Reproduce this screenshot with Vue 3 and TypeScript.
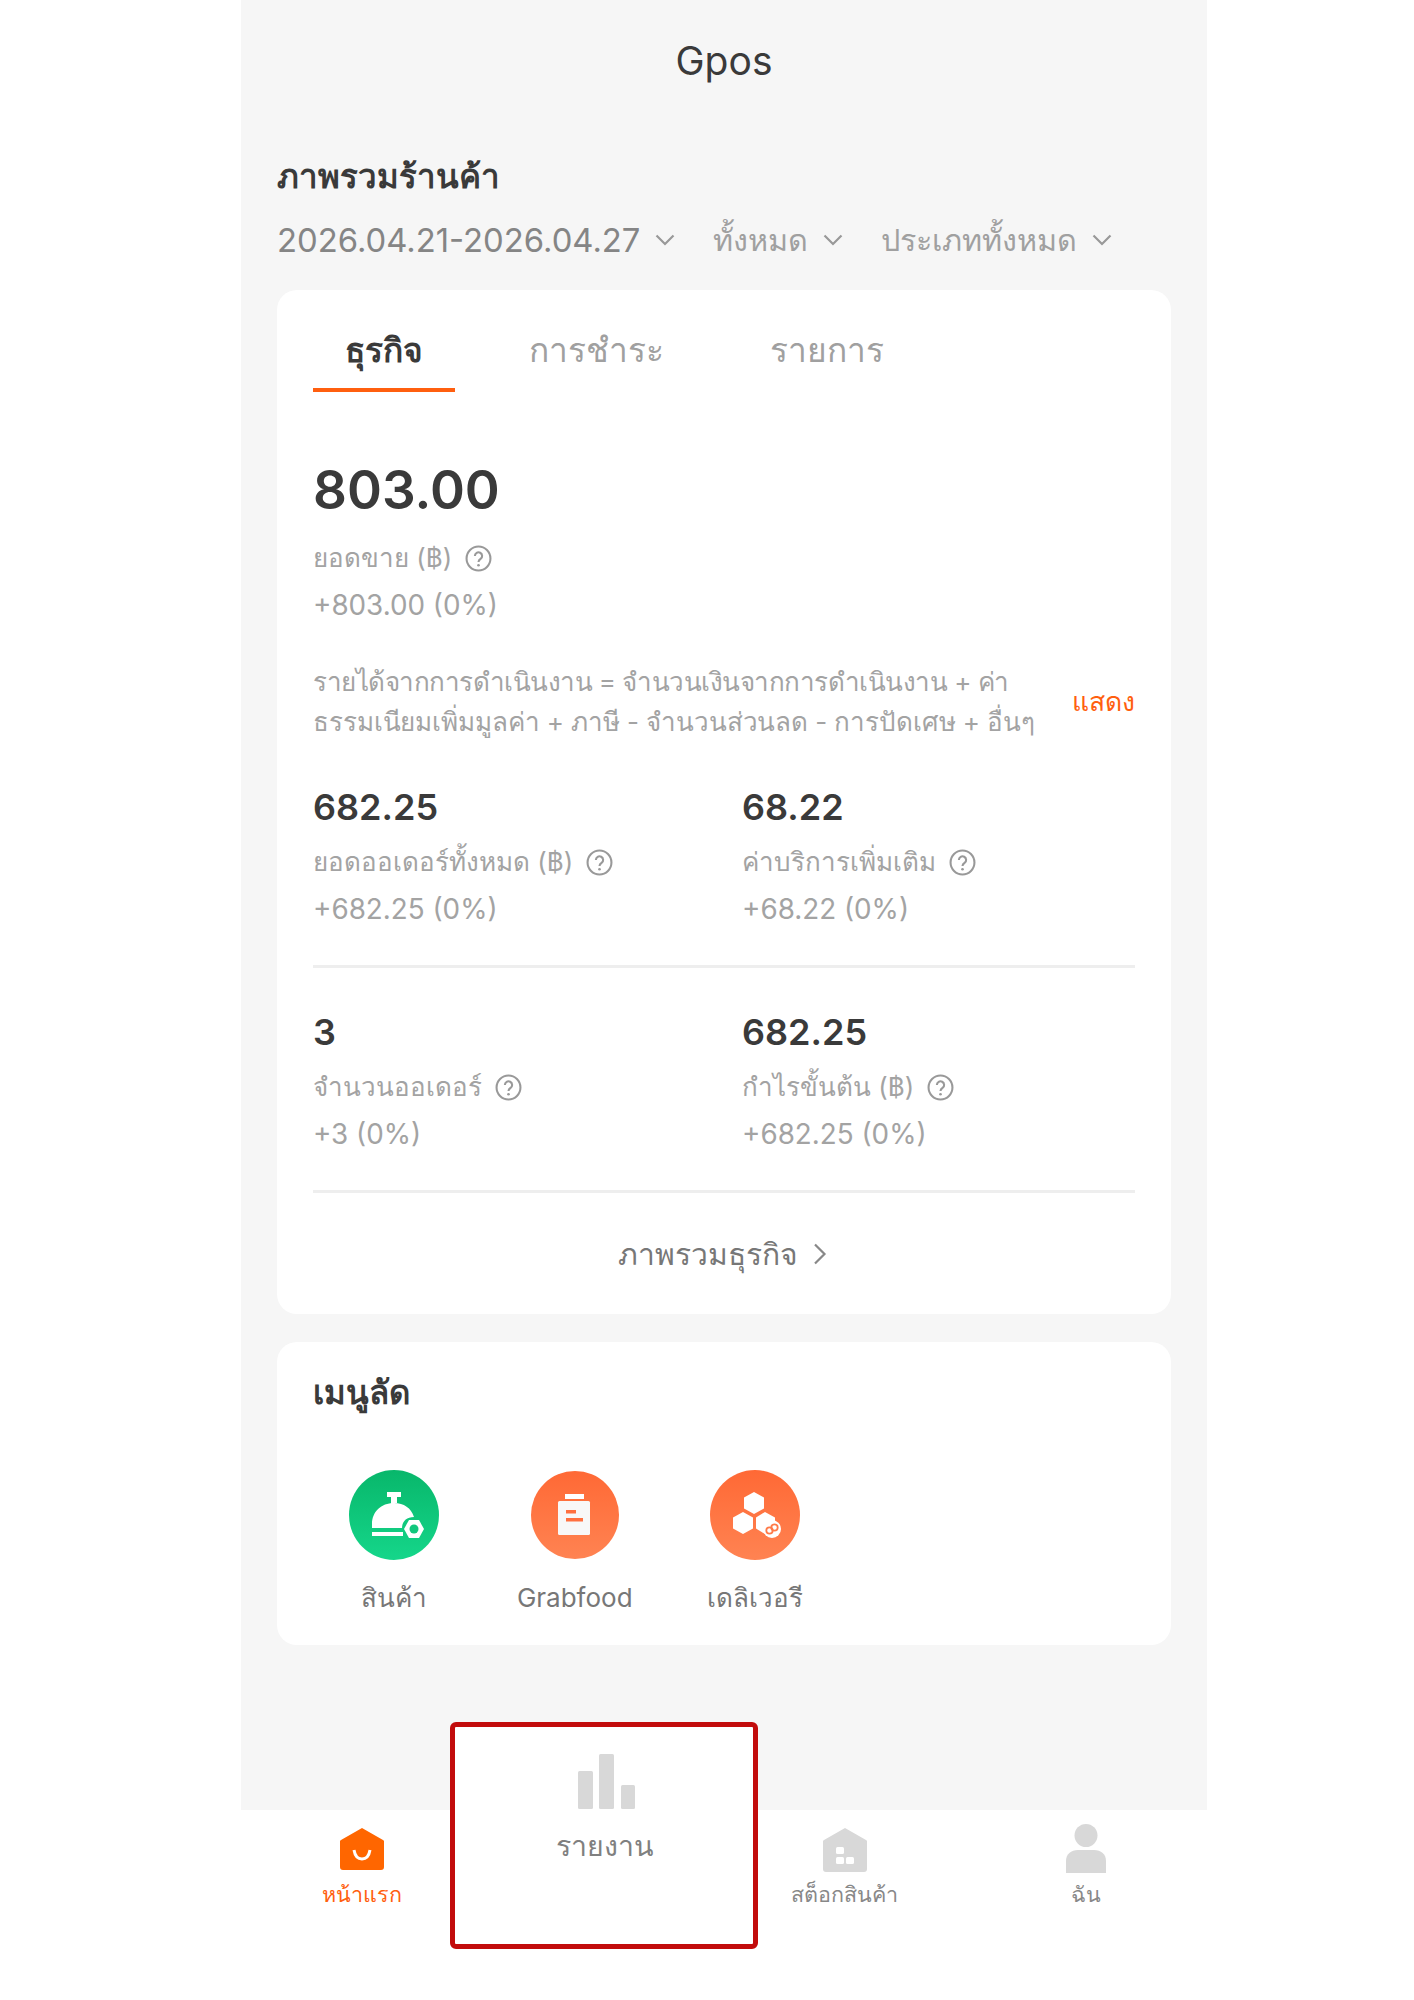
<script setup lang="ts">
interface Stat {
  value: string
  label: string
  change: string
}

const filters = [
  { text: '2026.04.21-2026.04.27', dark: true },
  { text: 'ทั้งหมด', dark: false },
  { text: 'ประเภททั้งหมด', dark: false }
]

const tabs = ['ธุรกิจ', 'การชำระ', 'รายการ']

const statRows: Stat[][] = [
  [
    { value: '682.25', label: 'ยอดออเดอร์ทั้งหมด (฿)', change: '+682.25 (0%)' },
    { value: '68.22', label: 'ค่าบริการเพิ่มเติม', change: '+68.22 (0%)' }
  ],
  [
    { value: '3', label: 'จำนวนออเดอร์', change: '+3 (0%)' },
    { value: '682.25', label: 'กำไรขั้นต้น (฿)', change: '+682.25 (0%)' }
  ]
]
</script>

<template>
  <div class="page">
    <main class="content">
      <header class="title">Gpos</header>
      <h2 class="heading">ภาพรวมร้านค้า</h2>

      <div class="filters">
        <div v-for="f in filters" :key="f.text" class="filter" :class="{ dark: f.dark }">
          <span>{{ f.text }}</span>
          <svg width="20" height="12" viewBox="0 0 20 12" fill="none">
            <path d="M1.5 1.5 10 10l8.500-8.500" stroke="#999" stroke-width="2.200" />
          </svg>
        </div>
      </div>

      <section class="card overview">
        <div class="tabs">
          <div v-for="(t, i) in tabs" :key="t" class="tab" :class="{ active: i === 0 }">{{ t }}</div>
        </div>

        <div class="big-value">803.00</div>
        <div class="label">
          <span>ยอดขาย (฿)</span>
          <svg class="help" width="27" height="27" viewBox="0 0 26 26" fill="none">
            <circle cx="13" cy="13" r="11.500" stroke="#999" stroke-width="2" />
            <path d="M9.500 10.500a3.500 3.500 0 1 1 5.500 2.900c-1.300.9-2 1.500-2 3" stroke="#999" stroke-width="2" />
            <circle cx="13" cy="19.500" r="1.300" fill="#999" />
          </svg>
        </div>
        <div class="change">+803.00 (0%)</div>

        <div class="formula">
          <p>
            <span class="formula-first">รายได้จากการดำเนินงาน = จำนวนเงินจากการดำเนินงาน + ค่า</span><br />
            <span>ธรรมเนียมเพิ่มมูลค่า + ภาษี - จำนวนส่วนลด - การปัดเศษ + อื่นๆ</span>
          </p>
          <span class="show">แสดง</span>
        </div>

        <div v-for="(row, r) in statRows" :key="r" class="stat-row">
          <div v-for="s in row" :key="s.label" class="stat">
            <div class="stat-value">{{ s.value }}</div>
            <div class="label">
              <span>{{ s.label }}</span>
              <svg class="help" width="27" height="27" viewBox="0 0 26 26" fill="none">
                <circle cx="13" cy="13" r="11.500" stroke="#999" stroke-width="2" />
                <path d="M9.500 10.500a3.500 3.500 0 1 1 5.500 2.900c-1.300.9-2 1.500-2 3" stroke="#999" stroke-width="2" />
                <circle cx="13" cy="19.500" r="1.300" fill="#999" />
              </svg>
            </div>
            <div class="change">{{ s.change }}</div>
          </div>
        </div>

        <div class="more">
          <span>ภาพรวมธุรกิจ</span>
          <svg width="14" height="22" viewBox="0 0 14 22" fill="none">
            <path d="M2 1.500 11.500 11 2 20.500" stroke="#888" stroke-width="2.200" />
          </svg>
        </div>
      </section>

      <section class="card shortcuts">
        <h3 class="shortcut-title">เมนูลัด</h3>
        <div class="shortcut-list">
          <div class="shortcut">
            <svg width="90" height="90" viewBox="0 0 90 90">
              <defs>
                <linearGradient id="greenFill" x1="0" y1="0" x2="0" y2="1">
                  <stop offset="0" stop-color="#08b76b" />
                  <stop offset="1" stop-color="#15d68a" />
                </linearGradient>
              </defs>
              <circle cx="45" cy="45" r="45" fill="url(#greenFill)" />
              <path d="M38 22h14v5h-4v6h-6v-6h-4z" fill="#fff" />
              <path d="M23 58v-4c0-12 9-21 22-21 10 0 17 5 20 14-8 0-12 5-12 11z" fill="#fff" />
              <rect x="23" y="62" width="31" height="4" fill="#fff" />
              <path d="M60 50h10l5 9-5 9H60l-5-9z" fill="#fff" />
              <circle cx="65" cy="59" r="4.500" fill="#12c77d" />
            </svg>
            <span>สินค้า</span>
          </div>
          <div class="shortcut">
            <svg width="90" height="90" viewBox="0 0 90 90">
              <defs>
                <linearGradient id="orangeA" x1="0" y1="0" x2="0" y2="1">
                  <stop offset="0" stop-color="#ff6935" />
                  <stop offset="1" stop-color="#ff8352" />
                </linearGradient>
              </defs>
              <circle cx="45" cy="45" r="44" fill="url(#orangeA)" />
              <rect x="35" y="24" width="19" height="5" fill="#fff" />
              <rect x="28" y="31" width="32" height="34" rx="1.500" fill="#f8f8f8" />
              <rect x="36" y="40" width="10" height="3.500" fill="#ff7040" />
              <rect x="36" y="48" width="17" height="3.500" fill="#ff7040" />
            </svg>
            <span>Grabfood</span>
          </div>
          <div class="shortcut">
            <svg width="90" height="90" viewBox="0 0 90 90">
              <defs>
                <linearGradient id="orangeB" x1="0" y1="0" x2="0" y2="1">
                  <stop offset="0" stop-color="#ff6935" />
                  <stop offset="1" stop-color="#ff8352" />
                </linearGradient>
              </defs>
              <circle cx="45" cy="45" r="45" fill="url(#orangeB)" />
              <path d="M44 22l10 5.500v11L44 44l-10-5.500v-11z" fill="#fff" />
              <path d="M33 42l10 5.500v11L33 64l-10-5.500v-11z" fill="#fff" />
              <path d="M46 47.500 55 42l10 5.500v11L55 64l-9-5.500z" fill="#fff" />
              <circle cx="62" cy="59" r="9" fill="#fff" />
              <circle cx="59.500" cy="60.500" r="3.200" fill="none" stroke="#ff7a48" stroke-width="1.800" />
              <circle cx="64.500" cy="57.500" r="3.200" fill="none" stroke="#ff7a48" stroke-width="1.800" />
            </svg>
            <span>เดลิเวอรี</span>
          </div>
        </div>
      </section>
    </main>

    <nav class="tabbar">
      <div class="nav-item active">
        <svg width="44" height="42" viewBox="0 0 44 42">
          <path d="M22 0 43 12a2 2 0 0 1 1 2v25a3 3 0 0 1-3 3H3a3 3 0 0 1-3-3V14a2 2 0 0 1 1-2z" fill="#ff6600" />
          <path d="M14 22c1 6 4 9 8 9s7-3 8-9" fill="none" stroke="#fff" stroke-width="3" />
        </svg>
        <span>หน้าแรก</span>
      </div>
      <div class="nav-item"></div>
      <div class="nav-item stock">
        <svg width="44" height="44" viewBox="0 0 44 44">
          <path d="M22 0 43 12a2 2 0 0 1 1 2v27a3 3 0 0 1-3 3H3a3 3 0 0 1-3-3V14a2 2 0 0 1 1-2z" fill="#d8d8d8" />
          <rect x="13" y="19" width="8" height="7" rx="1.500" fill="#fff" />
          <rect x="13" y="29" width="8" height="7" rx="1.500" fill="#fff" />
          <rect x="23" y="29" width="8" height="7" rx="1.500" fill="#fff" />
        </svg>
        <span>สต็อกสินค้า</span>
      </div>
      <div class="nav-item person">
        <svg width="40" height="49" viewBox="0 0 40 49">
          <ellipse cx="20" cy="11.500" rx="11.500" ry="11.500" fill="#d8d8d8" />
          <path d="M0 49V37c0-7 5-11 12-11h16c7 0 12 4 12 11v12z" fill="#d8d8d8" />
        </svg>
        <span>ฉัน</span>
      </div>
    </nav>

    <div class="callout">
      <svg class="callout-bars" width="58" height="56" viewBox="0 0 58 56">
        <rect x="0" y="17" width="15" height="38" rx="1.500" fill="#d8d8d8" />
        <rect x="21" y="0" width="15" height="55" rx="1.500" fill="#d8d8d8" />
        <rect x="43" y="31" width="14" height="24" rx="1.500" fill="#d8d8d8" />
      </svg>
      <span>รายงาน</span>
    </div>
  </div>
</template>

<style scoped>
.page {
  position: relative;
  width: 966px;
  height: 2000px;
  margin-left: 241px;
  font-family: Inter, "Noto Sans", "DejaVu Sans", sans-serif;
  color: #3a3a3a;
}

.content {
  height: 1810px;
  padding: 0 36px;
  box-sizing: border-box;
  background: #f6f6f6;
}

.title {
  height: 122px;
  line-height: 122px;
  text-align: center;
  font-size: 39px;
}

.heading {
  margin: 32px 0 0;
  line-height: 44px;
  font-size: 33px;
  font-weight: 600;
}

.filters {
  display: flex;
  gap: 38px;
  margin-top: 20px;
  line-height: 44px;
  font-size: 30.500px;
  color: #a0a0a0;
}

.filter {
  display: flex;
  align-items: center;
  gap: 15px;
}

.filter.dark {
  font-size: 32.800px;
  color: #858585;
}

.card {
  background: #fff;
  border-radius: 20px;
  padding: 0 36px;
}

.overview {
  height: 1024px;
  margin-top: 28px;
  padding-top: 28px;
  box-sizing: border-box;
}

.tabs {
  display: flex;
  gap: 42px;
}

.tab {
  padding: 0 32px 6px;
  border-bottom: 4px solid transparent;
  line-height: 64px;
  font-size: 33.500px;
  color: #a0a0a0;
}

.tab.active {
  border-bottom-color: #ff5f0f;
  color: #3a3a3a;
  font-weight: 600;
}

.big-value {
  margin-top: 66px;
  line-height: 64px;
  font-size: 53px;
  font-weight: 600;
}

.label {
  display: flex;
  align-items: center;
  gap: 13px;
  margin-top: 16px;
  line-height: 40px;
  font-size: 26px;
  color: #a3a3a3;
}

.help {
  flex-shrink: 0;
}

.change {
  margin-top: 7px;
  line-height: 40px;
  font-size: 27.800px;
  color: #a3a3a3;
}

.formula {
  display: flex;
  align-items: center;
  justify-content: space-between;
  margin-top: 37px;
}

.formula p {
  margin: 0;
  line-height: 40px;
  font-size: 26px;
  letter-spacing: -0.100px;
  white-space: nowrap;
  color: #a3a3a3;
}

.formula-first {
  letter-spacing: -0.500px;
}

.show {
  font-size: 26.500px;
  color: #ff5f0f;
}

.stat-row {
  display: grid;
  grid-template-columns: 429px 1fr;
  padding: 43px 0 36px;
  border-bottom: 3px solid #eee;
}

.stat-row + .stat-row {
  padding-top: 42px;
}

.stat-value {
  line-height: 44px;
  font-size: 36px;
  font-weight: 600;
}

.stat .label {
  margin-top: 13px;
}

.more {
  display: flex;
  align-items: center;
  justify-content: center;
  gap: 15px;
  margin-top: 39px;
  padding-right: 3px;
  line-height: 44px;
  font-size: 30px;
  color: #777;
}

.shortcuts {
  margin-top: 28px;
  padding: 28px 0 29px;
}

.shortcut-title {
  margin: 0;
  padding-left: 36px;
  line-height: 44px;
  font-size: 33px;
  font-weight: 600;
}

.shortcut-list {
  display: flex;
  margin-top: 56px;
  padding-left: 27px;
}

.shortcut {
  display: flex;
  flex-direction: column;
  align-items: center;
  gap: 20px;
  width: 180.500px;
  line-height: 36px;
  font-size: 26px;
  color: #777;
}

.tabbar {
  display: grid;
  grid-template-columns: repeat(4, 1fr);
  height: 190px;
  background: #fff;
}

.nav-item {
  display: flex;
  flex-direction: column;
  align-items: center;
  gap: 8px;
  padding-top: 18px;
  line-height: 32px;
  font-size: 21.500px;
  color: #888;
}

.nav-item.active {
  color: #ff5f0f;
}

.nav-item.stock {
  gap: 6px;
}

.nav-item.person {
  padding-top: 14px;
  gap: 5px;
}

.callout {
  position: absolute;
  left: 209px;
  top: 1722px;
  width: 308px;
  height: 227px;
  box-sizing: border-box;
  display: flex;
  flex-direction: column;
  align-items: center;
  gap: 16px;
  padding-top: 27px;
  border: 5px solid #c20c0c;
  border-radius: 6px;
  background: #fff;
  line-height: 40px;
  font-size: 28.500px;
  color: #808080;
}

.callout-bars {
  margin-left: 5px;
}
</style>
